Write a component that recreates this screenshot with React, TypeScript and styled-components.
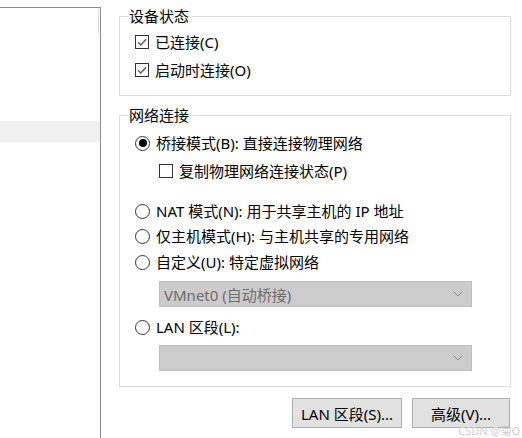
import React from 'react'
import styled, { createGlobalStyle } from 'styled-components'

const GlobalStyle = createGlobalStyle`
	html, body {
		margin: 0;
		padding: 0;
		background: #fff;
	}
	body {
		font-family: "Noto Sans", "Noto Sans CJK SC", sans-serif;
		font-size: 15px;
		color: #000;
	}
`

const Page = styled.div`
	position: relative;
	display: flex;
	gap: 18px;
	width: 522px;
	height: 438px;
	overflow: hidden;
`

const ListPane = styled.div`
	position: relative;
	width: 100px;
	margin-top: 7px;
	border-top: 1px solid #8b8b93;
	border-right: 1px solid #8b8b93;
	background: #fff;
`

const ListRow = styled.div<{ selected?: boolean; top: number }>`
	height: 21px;
	margin-top: ${(p) => p.top}px;
	background: ${(p) => (p.selected ? '#f0f0f0' : 'transparent')};
`

const ScrollThumb = styled.div`
	position: absolute;
	right: 1px;
	top: 1px;
	width: 1px;
	height: 24px;
	background: #dadada;
`

const Side = styled.div`
	display: flex;
	flex-direction: column;
	width: 392px;
`

const Group = styled.fieldset<{ top: number; bottom: number }>`
	margin: ${(p) => p.top}px 0 0 0;
	padding: 0 15px ${(p) => p.bottom}px 15px;
	border: 1px solid #dcdcdc;
	display: flex;
	flex-direction: column;
`

const Legend = styled.legend`
	margin-left: -7px;
	padding: 0 2px 0 1px;
	line-height: 20px;
	height: 20px;
`

const Row = styled.label<{ top: number; indent?: number }>`
	display: flex;
	align-items: center;
	gap: 6px;
	height: 20px;
	line-height: 20px;
	margin-top: ${(p) => p.top}px;
	margin-left: ${(p) => p.indent || 0}px;
	white-space: nowrap;
`

const Box = styled.span`
	display: inline-flex;
	align-items: center;
	justify-content: center;
	box-sizing: border-box;
	width: 14px;
	height: 14px;
	border: 1px solid #333;
	background: #fff;
	flex: none;
`

const Radio = styled.span<{ checked?: boolean }>`
	display: inline-flex;
	align-items: center;
	justify-content: center;
	box-sizing: border-box;
	width: 15px;
	height: 15px;
	border: 1px solid #333;
	border-radius: 50%;
	background: #fff;
	flex: none;
	&::after {
		content: '';
		display: ${(p) => (p.checked ? 'block' : 'none')};
		width: 8px;
		height: 8px;
		border-radius: 50%;
		background: #000;
	}
`

const Select = styled.div<{ top: number }>`
	display: flex;
	align-items: center;
	justify-content: space-between;
	box-sizing: border-box;
	width: 313px;
	height: 26px;
	margin: ${(p) => p.top}px 0 0 24px;
	padding: 0 8px 0 4px;
	background: #cccccc;
	border: 1px solid #bfbfbf;
	color: #6d6d6d;
	white-space: nowrap;
`

const Buttons = styled.div`
	display: flex;
	justify-content: flex-end;
	gap: 10px;
	margin-top: 11px;
	padding-right: 1px;
`

const Button = styled.button<{ w: number }>`
	width: ${(p) => p.w}px;
	height: 30px;
	box-sizing: border-box;
	background: #e1e1e1;
	border: 1px solid #adadad;
	font: inherit;
	color: #000;
	padding: 0;
`

const Watermark = styled.div`
	position: absolute;
	right: 2px;
	bottom: 1px;
	font-size: 11px;
	line-height: 13px;
	color: #cfcfcf;
	white-space: nowrap;
`

const Check = () => (
	<svg width="10" height="8" viewBox="0 0 10 8">
		<path d="M1 4.2 L3.8 7 L9 1.2" fill="none" stroke="#555" strokeWidth="1.3" />
	</svg>
)

const Chevron = () => (
	<svg width="10" height="6" viewBox="0 0 10 6">
		<path d="M0.5 0.5 L5 5 L9.5 0.5" fill="none" stroke="#8f8f8f" strokeWidth="1" />
	</svg>
)

const App: React.FC = () => {
	return (
		<>
			<GlobalStyle />
			<Page>
				<ListPane>
					<ScrollThumb />
					<ListRow top={113} selected />
				</ListPane>
				<Side>
					<Group top={6} bottom={15}>
						<Legend>设备状态</Legend>
						<Row top={6}>
							<Box>
								<Check />
							</Box>
							已连接(C)
						</Row>
						<Row top={8}>
							<Box>
								<Check />
							</Box>
							启动时连接(O)
						</Row>
					</Group>
					<Group top={9} bottom={15}>
						<Legend>网络连接</Legend>
						<Row top={8}>
							<Radio checked />
							桥接模式(B): 直接连接物理网络
						</Row>
						<Row top={8} indent={24}>
							<Box />
							复制物理网络连接状态(P)
						</Row>
						<Row top={20}>
							<Radio />
							NAT 模式(N): 用于共享主机的 IP 地址
						</Row>
						<Row top={5}>
							<Radio />
							仅主机模式(H): 与主机共享的专用网络
						</Row>
						<Row top={6}>
							<Radio />
							自定义(U): 特定虚拟网络
						</Row>
						<Select top={9}>
							<span>VMnet0 (自动桥接)</span>
							<Chevron />
						</Select>
						<Row top={10}>
							<Radio />
							LAN 区段(L):
						</Row>
						<Select top={8}>
							<span />
							<Chevron />
						</Select>
					</Group>
					<Buttons>
						<Button w={110}>LAN 区段(S)...</Button>
						<Button w={98}>高级(V)...</Button>
					</Buttons>
				</Side>
				<Watermark>CSDN @菊O</Watermark>
			</Page>
		</>
	)
}

export default App
